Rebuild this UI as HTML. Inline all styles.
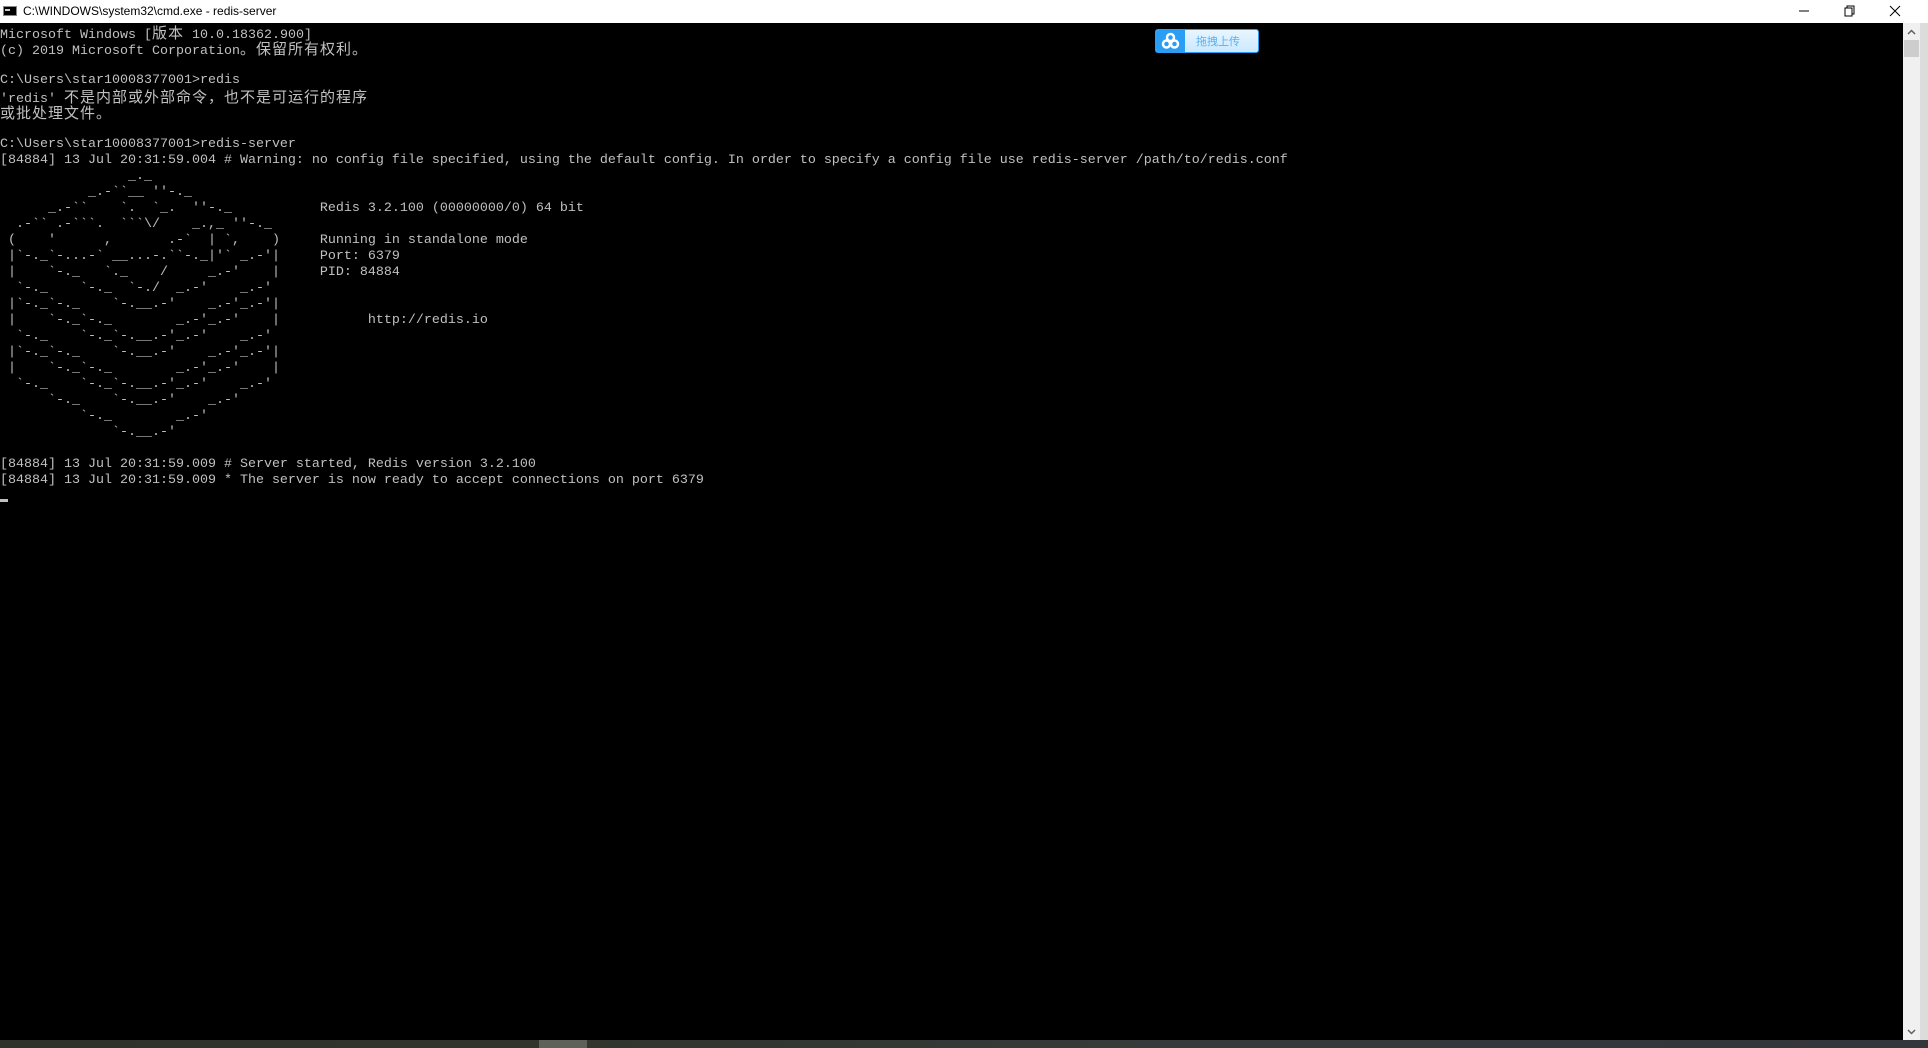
<!DOCTYPE html>
<html><head><meta charset="utf-8"><style>
*{margin:0;padding:0;box-sizing:border-box}
body{width:1928px;height:1048px;background:#000;position:relative;overflow:hidden;font-family:"Liberation Mono","Noto Sans CJK SC",monospace}
#title{position:absolute;left:0;top:0;width:1928px;height:23px;background:#fff;font-family:"Liberation Sans","Noto Sans CJK SC",sans-serif;font-size:12px;color:#000}
#title .t{position:absolute;left:23px;top:4px}
#title .ic{position:absolute;left:3px;top:6px;width:14px;height:10px;background:#000;border:1px solid #888}
#title .ic:after{content:"";position:absolute;left:1px;top:2px;width:5px;height:2px;background:#ccc}
.term{position:absolute;left:0;top:25px;color:#c0c0c0;font-size:13.333px;line-height:16px;white-space:normal}
.term div{height:16px;white-space:pre;overflow:visible}
.c{font-family:"Noto Sans CJK SC",sans-serif;font-size:15px;letter-spacing:1px;line-height:16px}
#sb{position:absolute;left:1903px;top:23px;width:17px;height:1017px;background:#f0f0f0}
#thumb{position:absolute;left:1904px;top:40px;width:15px;height:17px;background:#cdcdcd}
#rs{position:absolute;left:1920px;top:23px;width:8px;height:1017px;background:#dcdcdc}
#tb{position:absolute;left:0;top:1040px;width:1928px;height:8px;background:linear-gradient(90deg,#2e322a 0%,#30342c 25%,#363a3a 60%,#33363a 100%)}
#tbh{position:absolute;left:539px;top:1040px;width:48px;height:8px;background:#5e605a}
#btn{position:absolute;left:1155px;top:29px;width:104px;height:24px;border:1px solid #2a9df4;border-radius:3px;background:linear-gradient(#e8f6ff,#cbe9ff);overflow:hidden}
#btn .i{position:absolute;left:0;top:0;width:29px;height:22px;background:#2a9df4}
#btn .tx{position:absolute;left:40px;top:3px;font-family:"Noto Sans CJK SC",sans-serif;font-size:11px;color:#5ab0f0}
</style></head><body>
<div id="title"><div class="ic"></div><span class="t">C:\WINDOWS\system32\cmd.exe - redis-server</span>
<svg style="position:absolute;left:1795px;top:0" width="133" height="23"><line x1="4" y1="11" x2="14" y2="11" stroke="#000"/><rect x="50" y="8" width="7" height="8" fill="none" stroke="#000"/><path d="M52 8V6h7v8h-2" fill="none" stroke="#000"/><path d="M95 6l10 10M105 6l-10 10" stroke="#000"/></svg></div>
<div class="term">
<div>Microsoft Windows [<span class="c">版本</span> 10.0.18362.900]</div>
<div>(c) 2019 Microsoft Corporation<span class="c">。保留所有权利。</span></div>
<div></div>
<div>C:\Users\star10008377001&gt;redis</div>
<div>'redis' <span class="c">不是内部或外部命令，也不是可运行的程序</span></div>
<div><span class="c">或批处理文件。</span></div>
<div></div>
<div>C:\Users\star10008377001&gt;redis-server</div>
<div>[84884] 13 Jul 20:31:59.004 # Warning: no config file specified, using the default config. In order to specify a config file use redis-server /path/to/redis.conf</div>
<div>                _._</div>
<div>           _.-&#96;&#96;__ ''-._</div>
<div>      _.-&#96;&#96;    &#96;.  &#96;_.  ''-._           Redis 3.2.100 (00000000/0) 64 bit</div>
<div>  .-&#96;&#96; .-&#96;&#96;&#96;.  &#96;&#96;&#96;\/    _.,_ ''-._</div>
<div> (    '      ,       .-&#96;  | &#96;,    )     Running in standalone mode</div>
<div> |&#96;-._&#96;-...-&#96; __...-.&#96;&#96;-._|'&#96; _.-'|     Port: 6379</div>
<div> |    &#96;-._   &#96;._    /     _.-'    |     PID: 84884</div>
<div>  &#96;-._    &#96;-._  &#96;-./  _.-'    _.-'</div>
<div> |&#96;-._&#96;-._    &#96;-.__.-'    _.-'_.-'|</div>
<div> |    &#96;-._&#96;-._        _.-'_.-'    |           http://redis.io</div>
<div>  &#96;-._    &#96;-._&#96;-.__.-'_.-'    _.-'</div>
<div> |&#96;-._&#96;-._    &#96;-.__.-'    _.-'_.-'|</div>
<div> |    &#96;-._&#96;-._        _.-'_.-'    |</div>
<div>  &#96;-._    &#96;-._&#96;-.__.-'_.-'    _.-'</div>
<div>      &#96;-._    &#96;-.__.-'    _.-'</div>
<div>          &#96;-._        _.-'</div>
<div>              &#96;-.__.-'</div>
<div></div>
<div>[84884] 13 Jul 20:31:59.009 # Server started, Redis version 3.2.100</div>
<div>[84884] 13 Jul 20:31:59.009 * The server is now ready to accept connections on port 6379</div>
</div>
<div style="position:absolute;left:0;top:499px;width:8px;height:3px;background:#c0c0c0"></div>
<div id="btn"><div class="i"><svg width="29" height="22"><g fill="none" stroke="#fff" stroke-width="2.5"><circle cx="14.5" cy="7.5" r="3.5"/><circle cx="10.5" cy="14" r="3.5"/><circle cx="18.5" cy="14" r="3.5"/></g></svg></div><span class="tx">拖拽上传</span></div>
<div id="sb"></div><div id="thumb"></div>
<svg style="position:absolute;left:1903px;top:26px" width="17" height="12"><path d="M5 8l3.5-3.5L12 8" fill="none" stroke="#606060" stroke-width="1.5"/></svg>
<svg style="position:absolute;left:1903px;top:1026px" width="17" height="12"><path d="M5 4l3.5 3.5L12 4" fill="none" stroke="#606060" stroke-width="1.5"/></svg>
<div id="rs"></div>
<div id="tb"></div><div id="tbh"></div>
</body></html>
